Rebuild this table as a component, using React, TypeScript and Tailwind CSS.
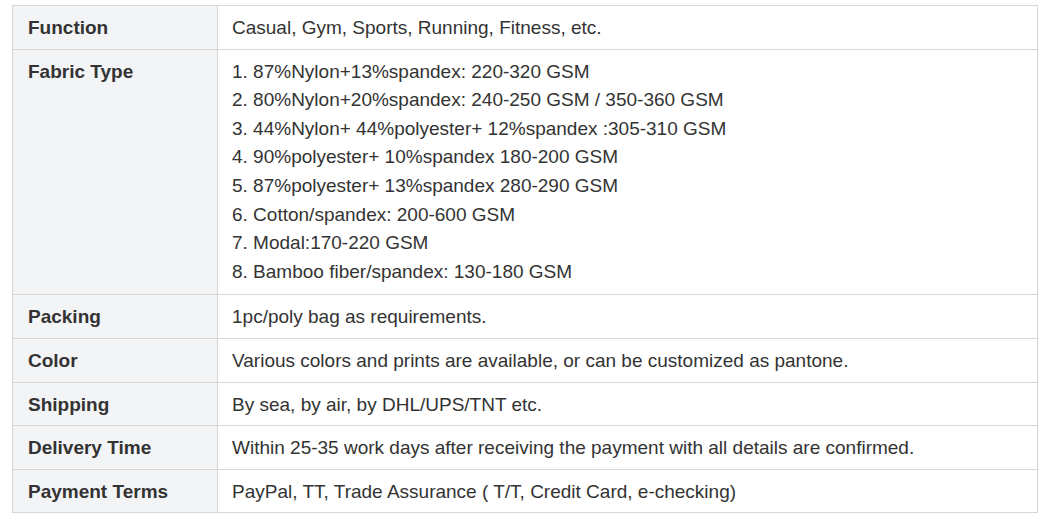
const rows: { label: string; value: string[] }[] = [
  { label: "Function", value: ["Casual, Gym, Sports, Running, Fitness, etc."] },
  {
    label: "Fabric Type",
    value: [
      "1. 87%Nylon+13%spandex: 220-320 GSM",
      "2. 80%Nylon+20%spandex: 240-250 GSM / 350-360 GSM",
      "3. 44%Nylon+ 44%polyester+ 12%spandex :305-310 GSM",
      "4. 90%polyester+ 10%spandex 180-200 GSM",
      "5. 87%polyester+ 13%spandex 280-290 GSM",
      "6. Cotton/spandex: 200-600 GSM",
      "7. Modal:170-220 GSM",
      "8. Bamboo fiber/spandex: 130-180 GSM",
    ],
  },
  { label: "Packing", value: ["1pc/poly bag as requirements."] },
  { label: "Color", value: ["Various colors and prints are available, or can be customized as pantone."] },
  { label: "Shipping", value: ["By sea, by air, by DHL/UPS/TNT etc."] },
  { label: "Delivery Time", value: ["Within 25-35 work days after receiving the payment with all details are confirmed."] },
  { label: "Payment Terms", value: ["PayPal, TT, Trade Assurance ( T/T, Credit Card, e-checking)"] },
];

export default function App() {
  return (
    <div className="w-[1060px] h-[528px] bg-white pt-[5px] pl-[12px] font-['Liberation_Sans',Arial,sans-serif] text-[#333] text-[19px] leading-[28.6px]">
      <table className="w-[1026px] border-collapse border border-[#d6d6d6]">
        <tbody>
          {rows.map((r) => (
            <tr key={r.label}>
              <td className="w-[205px] align-top bg-[#f3f4f6] border border-[#d6d6d6] pl-[15px] pr-[10px] pt-[8px] pb-[6px] font-bold">
                {r.label}
              </td>
              <td className="align-top border border-[#d6d6d6] px-[14px] pt-[8px] pb-[6px]">
                {r.value.map((v) => (
                  <div key={v}>{v}</div>
                ))}
                {r.value.length > 1 && <div className="h-[2px]" />}
              </td>
            </tr>
          ))}
        </tbody>
      </table>
    </div>
  );
}
